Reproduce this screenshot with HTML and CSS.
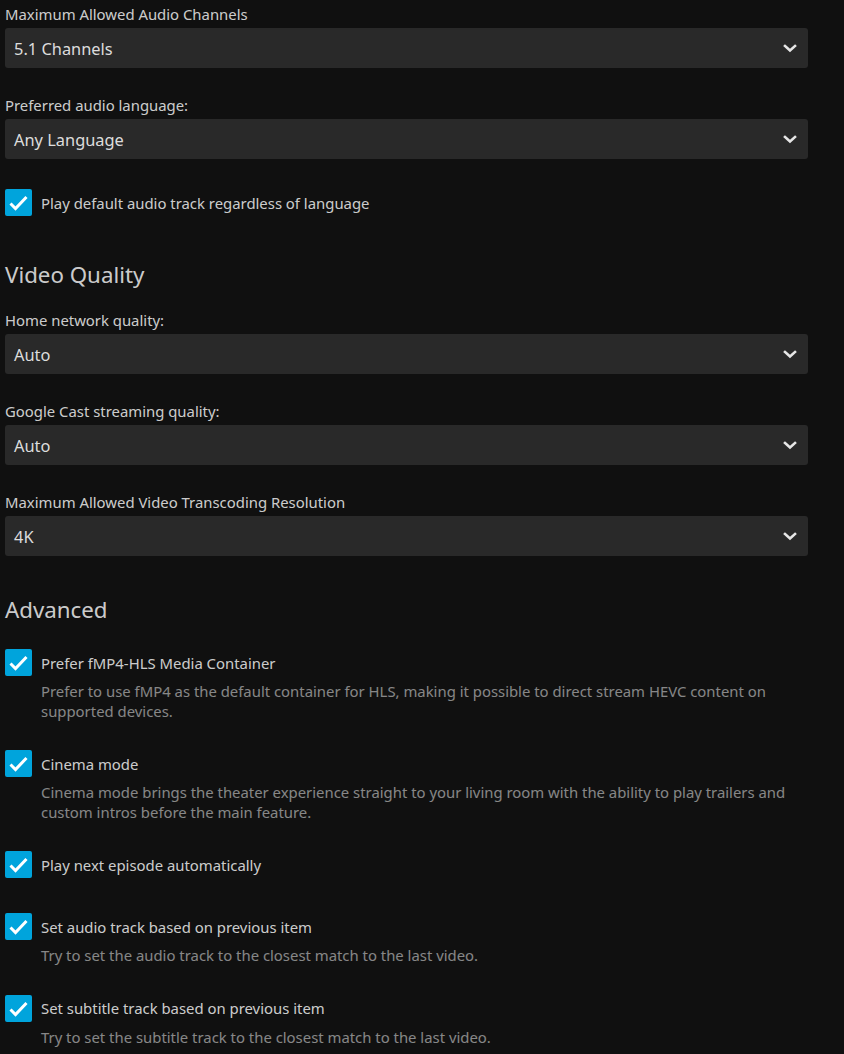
FILE: index.html
```html
<!DOCTYPE html>
<html lang="en">
  <head>
    <meta charset="UTF-8" />
    <meta name="viewport" content="width=device-width, initial-scale=1.0" />
    <title>Playback Settings</title>
    <link rel="stylesheet" href="styles.css">
  </head>
  <body>
    <div class="settings">
      <div class="selectContainer">
        <label class="selectLabel">Maximum Allowed Audio Channels</label>
        <div class="selectBox">
          <span>5.1 Channels</span>
          <svg class="selectArrow" viewBox="0 0 14 9"><path d="M2 2 L7 6.5 L12 2" /></svg>
        </div>
      </div>

      <div class="selectContainer">
        <label class="selectLabel">Preferred audio language:</label>
        <div class="selectBox">
          <span>Any Language</span>
          <svg class="selectArrow" viewBox="0 0 14 9"><path d="M2 2 L7 6.5 L12 2" /></svg>
        </div>
      </div>

      <div class="checkboxContainer">
        <div class="checkRow">
          <span class="checkbox"><svg viewBox="0 0 27 27"><path d="M5.5 14.5 L10.5 19.5 L21.5 8" /></svg></span>
          <span class="checkLabel">Play default audio track regardless of language</span>
        </div>
      </div>

      <h2 class="sectionTitle">Video Quality</h2>

      <div class="selectContainer">
        <label class="selectLabel">Home network quality:</label>
        <div class="selectBox">
          <span>Auto</span>
          <svg class="selectArrow" viewBox="0 0 14 9"><path d="M2 2 L7 6.5 L12 2" /></svg>
        </div>
      </div>

      <div class="selectContainer">
        <label class="selectLabel">Google Cast streaming quality:</label>
        <div class="selectBox">
          <span>Auto</span>
          <svg class="selectArrow" viewBox="0 0 14 9"><path d="M2 2 L7 6.5 L12 2" /></svg>
        </div>
      </div>

      <div class="selectContainer">
        <label class="selectLabel">Maximum Allowed Video Transcoding Resolution</label>
        <div class="selectBox">
          <span>4K</span>
          <svg class="selectArrow" viewBox="0 0 14 9"><path d="M2 2 L7 6.5 L12 2" /></svg>
        </div>
      </div>

      <h2 class="sectionTitle">Advanced</h2>

      <div class="checkboxContainer withDescription">
        <div class="checkRow">
          <span class="checkbox"><svg viewBox="0 0 27 27"><path d="M5.5 14.5 L10.5 19.5 L21.5 8" /></svg></span>
          <span class="checkLabel">Prefer fMP4-HLS Media Container</span>
        </div>
        <div class="fieldDescription">Prefer to use fMP4 as the default container for HLS, making it possible to direct stream HEVC content on supported devices.</div>
      </div>

      <div class="checkboxContainer withDescription">
        <div class="checkRow">
          <span class="checkbox"><svg viewBox="0 0 27 27"><path d="M5.5 14.5 L10.5 19.5 L21.5 8" /></svg></span>
          <span class="checkLabel">Cinema mode</span>
        </div>
        <div class="fieldDescription">Cinema mode brings the theater experience straight to your living room with the ability to play trailers and custom intros before the main feature.</div>
      </div>

      <div class="checkboxContainer">
        <div class="checkRow">
          <span class="checkbox"><svg viewBox="0 0 27 27"><path d="M5.5 14.5 L10.5 19.5 L21.5 8" /></svg></span>
          <span class="checkLabel">Play next episode automatically</span>
        </div>
      </div>

      <div class="checkboxContainer withDescription">
        <div class="checkRow">
          <span class="checkbox"><svg viewBox="0 0 27 27"><path d="M5.5 14.5 L10.5 19.5 L21.5 8" /></svg></span>
          <span class="checkLabel">Set audio track based on previous item</span>
        </div>
        <div class="fieldDescription">Try to set the audio track to the closest match to the last video.</div>
      </div>

      <div class="checkboxContainer withDescription">
        <div class="checkRow">
          <span class="checkbox"><svg viewBox="0 0 27 27"><path d="M5.5 14.5 L10.5 19.5 L21.5 8" /></svg></span>
          <span class="checkLabel">Set subtitle track based on previous item</span>
        </div>
        <div class="fieldDescription">Try to set the subtitle track to the closest match to the last video.</div>
      </div>
    </div>
  </body>
</html>
```

FILE: styles.css
```css
html {
  font-size: 14.88px;
}

body {
  margin: 0;
  background: #101010;
  color: rgba(255, 255, 255, 0.8);
  font-family: "Noto Sans", sans-serif;
}

.settings {
  display: flex;
  flex-direction: column;
  width: 803px;
  padding: 4px 0 0 5px;
}

.selectContainer {
  margin-bottom: 27px;
}

.selectLabel {
  display: block;
  font-size: 14.88px;
  line-height: 20px;
  margin-bottom: 4px;
}

.selectBox {
  display: flex;
  align-items: center;
  justify-content: space-between;
  height: 40px;
  padding: 0 11px 0 9px;
  background: #292929;
  border-radius: 3px;
  font-size: 16.4px;
  color: rgba(255, 255, 255, 0.85);
}

.selectArrow {
  width: 14px;
  height: 9px;
  fill: none;
  stroke: #e6e6e6;
  stroke-width: 2.6;
  stroke-linecap: square;
}

.checkboxContainer {
  margin: 3px 0 32px;
}

.checkboxContainer.withDescription {
  margin-bottom: 26px;
}

.sectionTitle + .checkboxContainer {
  margin-top: 4px;
}

.checkRow {
  display: flex;
  align-items: center;
  gap: 9px;
}

.checkbox {
  display: block;
  width: 27px;
  height: 27px;
  flex: none;
  background: #00a4dc;
  border-radius: 2px;
}

.checkbox svg {
  display: block;
  width: 27px;
  height: 27px;
  fill: none;
  stroke: #fff;
  stroke-width: 3;
}

.checkLabel {
  font-size: 14.88px;
  line-height: 20px;
}

.fieldDescription {
  margin: 6px 0 0 36px;
  font-size: 14.88px;
  line-height: 19.5px;
  color: rgba(255, 255, 255, 0.5);
}

.sectionTitle {
  margin: 13px 0 21px;
  font-size: 22.3px;
  font-weight: 400;
  line-height: 28px;
}
```
